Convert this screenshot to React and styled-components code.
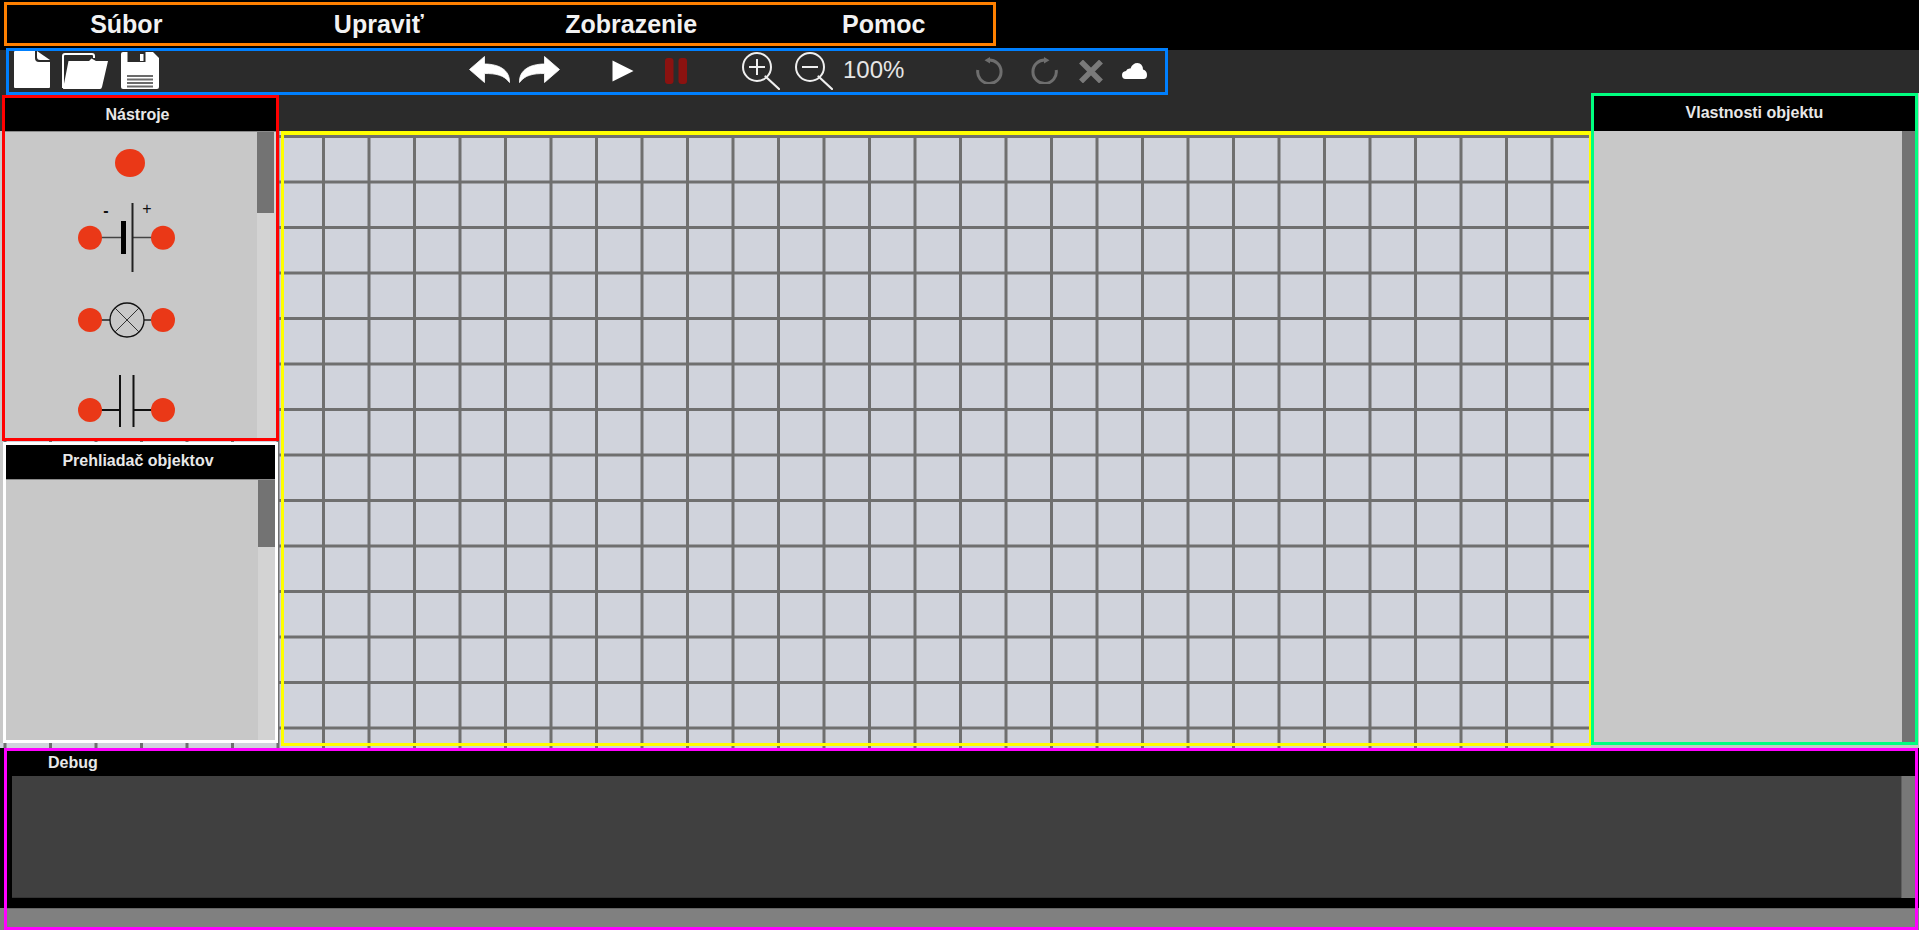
import React from "react";
import styled, { createGlobalStyle } from "styled-components";

const Global = createGlobalStyle`
  html, body { margin: 0; padding: 0; background: #2b2b2b; overflow: hidden; }
  * { box-sizing: border-box; }
`;

const Page = styled.div`
  width: 1919px;
  height: 930px;
  display: flex;
  flex-direction: column;
  overflow: hidden;
  background: #2b2b2b;
  font-family: "Liberation Sans", Arial, sans-serif;
`;

const TopBar = styled.header`
  height: 50px;
  flex: none;
  background: #000;
  padding: 2px 0 0 4px;
`;

const MenuFrame = styled.nav`
  width: 992px;
  height: 44px;
  border: 3px solid #ff8000;
`;

const MenuList = styled.div`
  display: grid;
  grid-template-columns: repeat(4, 252.5px);
  margin-left: -7px;
  height: 100%;
`;

const MenuItem = styled.div`
  display: flex;
  align-items: center;
  justify-content: center;
  color: #f2f2f2;
  font-size: 25px;
  font-weight: 700;
`;

const ToolStrip = styled.div`
  height: 45px;
  flex: none;
  padding-left: 6px;
`;

const ToolFrame = styled.div`
  width: 1162px;
  height: 47px;
  margin-top: -2px;
  border: 3px solid #0080ff;
  background: #2b2b2b;
  display: flex;
  align-items: flex-start;
`;

const ToolIcon = styled.svg`
  display: block;
  flex: none;
  margin-left: ${(p) => p.$gap}px;
  margin-top: ${(p) => p.$top}px;
`;

const ZoomLabel = styled.span`
  flex: none;
  width: 61px;
  margin-left: 10px;
  margin-top: 5px;
  color: #e6e6e6;
  font-size: 24px;
  line-height: 28px;
`;

const Workspace = styled.main`
  height: 653px;
  flex: none;
  display: flex;
  align-items: flex-start;
  background-color: #d0d3dc;
  background-image:
    linear-gradient(#2b2b2b 36px, transparent 36px),
    repeating-linear-gradient(90deg, transparent 3px, #6f6f6f 4px, #6f6f6f 6px, transparent 7px, transparent 48.5px),
    repeating-linear-gradient(180deg, transparent 39.5px, #6f6f6f 40.5px, #6f6f6f 42.5px, transparent 43.5px, transparent 85px);
`;

const LeftColumn = styled.aside`
  width: 281px;
  flex: none;
  display: flex;
  flex-direction: column;
  background: linear-gradient(#c8c8c8, #c8c8c8) 0 36px / 3px 100% no-repeat;
`;

const Canvas = styled.section`
  width: 1310px;
  height: 615px;
  flex: none;
  margin-top: 36px;
  border: solid #ffff00;
  border-width: 4px 2px 3px 3px;
`;

const RightColumn = styled.aside`
  width: 328px;
  height: 655px;
  flex: none;
  margin-top: -2px;
  background: #c8c8c8;
`;

const Panel = styled.section`
  width: ${(p) => p.$w}px;
  height: ${(p) => p.$h}px;
  flex: none;
  margin: ${(p) => p.$m};
  border: 3px solid ${(p) => p.$color};
  display: flex;
  flex-direction: column;
  background: #c8c8c8;
`;

const PanelTitle = styled.h2`
  margin: 0;
  flex: none;
  height: ${(p) => p.$h}px;
  background: #000;
  color: #e8e8e8;
  font-size: 16px;
  font-weight: 700;
  display: flex;
  align-items: center;
  justify-content: center;
  padding-right: ${(p) => p.$shift}px;
  padding-bottom: ${(p) => p.$lift}px;
  border-bottom: ${(p) => (p.$rule ? "1px solid #8a8a8a" : "none")};
`;

const PanelBody = styled.div`
  flex: 1;
  min-height: 0;
  display: flex;
  background: #c8c8c8;
`;

const PaneContent = styled.div`
  width: ${(p) => p.$w}px;
  flex: none;
  overflow: hidden;
`;

const Track = styled.div`
  width: ${(p) => p.$w}px;
  flex: none;
  background: #d3d3d3;
`;

const Thumb = styled.div`
  height: ${(p) => p.$h};
  background: #737373;
`;

const Spacer = styled.div`
  flex: 1;
  background: #d3d3d3;
`;

const Tool = styled.svg`
  display: block;
`;

const DebugDock = styled.footer`
  height: 182px;
  flex: none;
  padding-left: 4px;
  background: linear-gradient(#000 160px, #808080 160px);
`;

const DebugFrame = styled.section`
  width: 1914px;
  height: 182px;
  border: 3px solid #ff00ff;
  display: flex;
  flex-direction: column;
  background: #000;
`;

const DebugTitle = styled.h2`
  margin: 0;
  flex: none;
  height: 25px;
  padding-left: 41px;
  color: #e8e8e8;
  font-size: 16px;
  font-weight: 700;
  line-height: 24px;
`;

const DebugBody = styled.div`
  flex: none;
  height: 122px;
  margin-left: 5px;
  display: flex;
`;

const DebugLog = styled.div`
  flex: 1;
  background: #404040;
  border-bottom: 1px solid #333;
`;

const DebugScroll = styled.div`
  width: 14px;
  flex: none;
  background: #787878;
  border-left: 1px solid #5f5f5f;
`;

const DebugGap = styled.div`
  flex: none;
  height: 10px;
`;

const DebugStatus = styled.div`
  flex: 1;
  background: #808080;
  border-top: 1px solid #666;
`;

const NODE = "#ea3817";

const Node = ({ x, y, r = 12 }) => <circle cx={x} cy={y} r={r} fill={NODE} />;

const JunctionTool = () => (
  <Tool width="252" height="58" viewBox="5 132 252 58">
    <ellipse cx="130" cy="163" rx="15" ry="14" fill={NODE} />
  </Tool>
);

const BatteryTool = () => (
  <Tool width="252" height="95" viewBox="5 190 252 95">
    <path d="M100 237.5H121M133 237.5H153" stroke="#444" strokeWidth="1.5" />
    <rect x="121" y="221" width="5" height="33" fill="#000" />
    <rect x="131.5" y="203" width="2" height="69" fill="#222" />
    <text x="106" y="216" fontSize="16" fontWeight="700" textAnchor="middle" fontFamily="Liberation Sans" fill="#111">-</text>
    <text x="147" y="214" fontSize="16" textAnchor="middle" fontFamily="Liberation Sans" fill="#111">+</text>
    <Node x={90} y={237.7} />
    <Node x={163} y={237.7} />
  </Tool>
);

const LampTool = () => (
  <Tool width="252" height="65" viewBox="5 285 252 65">
    <path d="M100 320H110M144 320H153" stroke="#222" strokeWidth="1.5" />
    <circle cx="127" cy="320" r="17" fill="none" stroke="#111" strokeWidth="1.3" />
    <path d="M115 308L139 332M139 308L115 332" stroke="#333" strokeWidth="1" />
    <Node x={90} y={320} />
    <Node x={163} y={320} />
  </Tool>
);

const CapacitorTool = () => (
  <Tool width="252" height="88" viewBox="5 350 252 88">
    <path d="M100 410H120M133 410H153" stroke="#111" strokeWidth="2" />
    <path d="M120 375V427M133.500 375V427" stroke="#111" strokeWidth="2" />
    <Node x={90} y={410} />
    <Node x={163} y={410} />
  </Tool>
);

const Rotate = ({ gap, mirror }) => (
  <ToolIcon $gap={gap} $top={6} width="27" height="27" viewBox="0 0 27 27">
    <g transform={mirror ? "translate(27 0) scale(-1 1)" : undefined}>
      <path d="M12 3.2A11.700 11.700 0 1 1 1.800 13" fill="none" stroke="#6e6e6e" strokeWidth="3" />
      <path d="M14 0L8.500 3.200L14 6.500Z" fill="#6e6e6e" />
    </g>
  </ToolIcon>
);

const Magnifier = ({ gap, plus }) => (
  <ToolIcon $gap={gap} $top={1} width="38" height="38" viewBox="0 0 38 38">
    <circle cx="15" cy="15" r="14" fill="none" stroke="#efefef" strokeWidth="2" />
    <path d="M23.500 24.500L37 37" stroke="#efefef" strokeWidth="2.200" strokeLinecap="round" />
    <path d={plus ? "M7 15H23M15 7V23" : "M7 15H23"} stroke="#efefef" strokeWidth="2" />
  </ToolIcon>
);

const ARROW = "M0.500 13.500L15.500 0.500V8C30 8 41 14 40.500 26.500C35 19 27 17.500 15.500 17.500V26.500Z";

export default function App() {
  return (
    <Page>
      <Global />
      <TopBar>
        <MenuFrame>
          <MenuList>
            <MenuItem>Súbor</MenuItem>
            <MenuItem>Upraviť</MenuItem>
            <MenuItem>Zobrazenie</MenuItem>
            <MenuItem>Pomoc</MenuItem>
          </MenuList>
        </MenuFrame>
      </TopBar>
      <ToolStrip>
        <ToolFrame>
          <ToolIcon $gap={5} $top={0} width="36" height="37" viewBox="0 0 36 37">
            <path d="M1 0H21V7Q21 11 25 11H36V36Q36 37 35 37H1Q0 37 0 36V1Q0 0 1 0Z" fill="#fff" />
            <path d="M23 0L36 9H26Q23 9 23 6Z" fill="#fff" />
          </ToolIcon>
          <ToolIcon $gap={12} $top={2} width="46" height="36" viewBox="0 0 46 36">
            <path d="M1 35V3Q1 1 3 1H30Q32 1 32 3V5" fill="none" stroke="#fff" strokeWidth="2" />
            <path d="M6.500 8H27L29.500 5.500L34 8H46L40 34Q39.500 36 38 36H1Z" fill="#fff" />
            <path d="M1 34H3" stroke="#fff" strokeWidth="2" />
          </ToolIcon>
          <ToolIcon $gap={13} $top={1} width="38" height="37" viewBox="0 0 38 37">
            <path d="M2 0H32L38 6V35Q38 37 36 37H2Q0 37 0 35V2Q0 0 2 0Z" fill="#fff" />
            <rect x="6.500" y="0" width="18" height="10" fill="#2b2b2b" />
            <rect x="19" y="2" width="3.500" height="7" fill="#fff" />
            <path d="M6 24H32M6 27.500H32M6 31H32M6 34.500H32" stroke="#6a6a6a" strokeWidth="1.800" />
          </ToolIcon>
          <ToolIcon $gap={310} $top={5} width="41" height="27" viewBox="0 0 41 27">
            <path d={ARROW} fill="#fff" stroke="#fff" strokeWidth="0.800" strokeLinejoin="round" />
          </ToolIcon>
          <ToolIcon $gap={9} $top={5} width="41" height="27" viewBox="0 0 41 27">
            <path d={ARROW} transform="translate(41 0) scale(-1 1)" fill="#fff" stroke="#fff" strokeWidth="0.800" strokeLinejoin="round" />
          </ToolIcon>
          <ToolIcon $gap={52} $top={9} width="22" height="22" viewBox="0 0 22 22">
            <path d="M0.500 0.500L21.500 11L0.500 21.500Z" fill="#fff" />
          </ToolIcon>
          <ToolIcon $gap={31} $top={7} width="22" height="26" viewBox="0 0 22 26">
            <rect x="0" y="0" width="8.500" height="26" rx="3" fill="#8b1210" />
            <rect x="13.500" y="0" width="8.500" height="26" rx="3" fill="#8b1210" />
          </ToolIcon>
          <Magnifier gap={55} plus />
          <Magnifier gap={15} />
          <ZoomLabel>100%</ZoomLabel>
          <Rotate gap={72} />
          <Rotate gap={28} mirror />
          <ToolIcon $gap={21} $top={9} width="24" height="23" viewBox="0 0 24 23">
            <path d="M2 1.500L22 21.500M22 1.500L2 21.500" stroke="#7a7a7a" strokeWidth="5.500" />
          </ToolIcon>
          <ToolIcon $gap={19} $top={12} width="25" height="16" viewBox="0 0 25 16">
            <path d="M3.500 16Q0 16 0 12Q0 8.500 4 8Q5 5 8.500 5.500Q10.500 0 15.500 0Q20.500 0 21 6.500Q25 7.500 25 12Q25 16 21.500 16Z" fill="#fff" />
          </ToolIcon>
        </ToolFrame>
      </ToolStrip>
      <Workspace>
        <LeftColumn>
          <Panel $w={277} $h={346} $m="0 0 0 2px" $color="#ff0000">
            <PanelTitle $h={34} $shift={6} $lift={0} $rule>Nástroje</PanelTitle>
            <PanelBody>
              <PaneContent $w={252}>
                <JunctionTool />
                <BatteryTool />
                <LampTool />
                <CapacitorTool />
              </PaneContent>
              <Track $w={17}>
                <Thumb $h="81px" />
              </Track>
              <Spacer />
            </PanelBody>
          </Panel>
          <Panel $w={275} $h={301} $m="1px 0 0 3px" $color="#ffffff">
            <PanelTitle $h={35} $shift={5} $lift={3} $rule>Prehliadač objektov</PanelTitle>
            <PanelBody>
              <PaneContent $w={252} />
              <Track $w={17}>
                <Thumb $h="67px" />
              </Track>
            </PanelBody>
          </Panel>
        </LeftColumn>
        <Canvas />
        <RightColumn>
          <Panel $w={327} $h={652} $m="0" $color="#00ff80">
            <PanelTitle $h={35} $shift={0} $lift={2}>Vlastnosti objektu</PanelTitle>
            <PanelBody>
              <PaneContent $w={308} />
              <Track $w={13}>
                <Thumb $h="100%" />
              </Track>
            </PanelBody>
          </Panel>
        </RightColumn>
      </Workspace>
      <DebugDock>
        <DebugFrame>
          <DebugTitle>Debug</DebugTitle>
          <DebugBody>
            <DebugLog />
            <DebugScroll />
          </DebugBody>
          <DebugGap />
          <DebugStatus />
        </DebugFrame>
      </DebugDock>
    </Page>
  );
}
